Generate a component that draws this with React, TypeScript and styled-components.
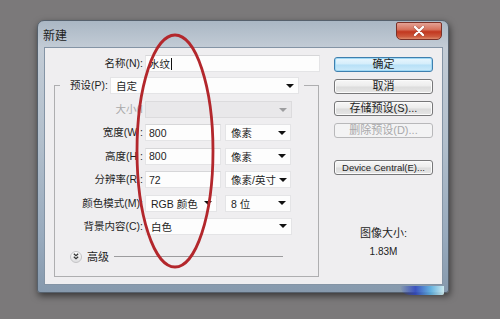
import React from 'react';
import styled, { createGlobalStyle } from 'styled-components';

const GlobalStyle = createGlobalStyle`
  html, body {
    margin: 0;
    padding: 0;
  }
  body {
    width: 500px;
    height: 319px;
    overflow: hidden;
    background: #7b797a;
    font-family: 'Liberation Sans', 'Noto Sans CJK SC', sans-serif;
    font-size: 10.5px;
    color: #1e1e1e;
  }
`;

const Page = styled.div`
  position: relative;
  width: 500px;
  height: 319px;
  box-sizing: border-box;
  padding: 20px 0 0 37px;
`;

const Window = styled.div`
  position: relative;
  width: 412px;
  height: 273px;
  box-sizing: border-box;
  display: flex;
  flex-direction: column;
  padding-bottom: 7px;
  border: 1px solid #56616d;
  border-radius: 7px 7px 3px 3px;
  background: linear-gradient(180deg, #aab7c4 0%, #c3ccd6 10%, #b2bfcc 45%, #98aabd 80%, #8699ad 100%);
  box-shadow: 1px 3px 7px rgba(0, 0, 0, 0.55);
`;

const TitleBar = styled.div`
  height: 26px;
  display: flex;
  justify-content: space-between;
  align-items: flex-start;
  padding-left: 5px;
`;

const Title = styled.span`
  padding-top: 2px;
  font-size: 12px;
  line-height: 26px;
  color: #222;
`;

const CloseButton = styled.div`
  width: 46px;
  height: 18px;
  margin: 1px 6px 0 0;
  box-sizing: border-box;
  display: flex;
  align-items: center;
  justify-content: center;
  border: 1px solid #7a3128;
  border-radius: 2px 2px 5px 5px;
  background: linear-gradient(180deg, #e3a194 0%, #d7735e 40%, #c2371f 55%, #cd5a3e 85%, #dd8a6c 100%);
`;

const Client = styled.div`
  flex: 1;
  margin: 0 5px 0 6px;
  box-sizing: border-box;
  display: flex;
  align-items: flex-start;
  border: 1px solid #8494a5;
  background: #efeef0;
`;

const FormColumn = styled.div`
  width: 266px;
  padding: 7px 0 0 9px;
`;

const NameRow = styled.div`
  display: flex;
  align-items: center;
  height: 17px;
`;

const Label = styled.span<{ $width: number; $disabled?: boolean }>`
  width: ${p => p.$width}px;
  flex-shrink: 0;
  margin-right: 2px;
  display: flex;
  justify-content: flex-end;
  white-space: nowrap;
  line-height: 17px;
  color: ${p => (p.$disabled ? '#a9a9a9' : '#1e1e1e')};
`;

const TextBox = styled.div<{ $width: number }>`
  width: ${p => p.$width}px;
  height: 17px;
  box-sizing: border-box;
  padding-left: 3px;
  display: flex;
  align-items: center;
  background: #fdfdfd;
  border: 1px solid #e4e4e6;
  border-top-color: #d6d6d8;
`;

const Caret = styled.span`
  width: 1px;
  height: 12px;
  margin-left: 1px;
  background: #111;
`;

const Select = styled.div<{ $width: number; $disabled?: boolean }>`
  width: ${p => p.$width}px;
  height: 17px;
  box-sizing: border-box;
  padding: 0 4px 0 5px;
  display: flex;
  align-items: center;
  justify-content: space-between;
  white-space: nowrap;
  background: ${p => (p.$disabled ? '#e9e8ea' : '#fdfdfd')};
  border: 1px solid ${p => (p.$disabled ? '#dcdbdd' : '#e4e4e6')};
`;

const Arrow = styled.span<{ $disabled?: boolean }>`
  width: 0;
  height: 0;
  flex-shrink: 0;
  margin-left: 3px;
  border-left: 4px solid transparent;
  border-right: 4px solid transparent;
  border-top: 4px solid ${p => (p.$disabled ? '#9d9d9f' : '#111')};
`;

const Group = styled.fieldset`
  width: 265px;
  box-sizing: border-box;
  margin: 5px 0 0 0;
  padding: 0 0 13px 0;
  border: 1px solid #aeaeb0;
  border-radius: 0;
`;

const Legend = styled.legend`
  margin-left: 5px;
  padding: 0 5px 0 0;
`;

const LegendRow = styled.div`
  display: flex;
  align-items: center;
  height: 17px;
`;

const Rows = styled.div`
  display: flex;
  flex-direction: column;
  gap: 6.4px;
  padding-top: 7px;
`;

const Row = styled.div`
  display: flex;
  align-items: center;
  height: 17px;
`;

const Spacer = styled.span<{ $width: number }>`
  width: ${p => p.$width}px;
  flex-shrink: 0;
`;

const AdvancedRow = styled.div`
  display: flex;
  align-items: center;
  height: 12px;
  margin-top: 16px;
  padding: 0 35px 0 15px;
`;

const Expander = styled.span`
  width: 12px;
  height: 12px;
  box-sizing: border-box;
  border-radius: 50%;
  display: flex;
  align-items: center;
  justify-content: center;
  border: 1px solid #c4c4c6;
  background: linear-gradient(180deg, #ffffff, #dedee0);
`;

const AdvancedText = styled.span`
  margin: 0 5px 0 5px;
  font-size: 11px;
  line-height: 12px;
`;

const Rule = styled.span`
  flex: 1;
  height: 1px;
  background: #9c9c9e;
`;

const ButtonColumn = styled.div`
  width: 99px;
  margin-left: 14px;
  padding-top: 9px;
  display: flex;
  flex-direction: column;
  align-items: stretch;
`;

const Button = styled.button<{ $primary?: boolean; $gap?: number }>`
  height: 15px;
  margin: ${p => p.$gap ?? 7}px 0 0 0;
  padding: 0;
  box-sizing: border-box;
  font-family: inherit;
  font-size: 11px;
  line-height: 13px;
  color: #1e1e1e;
  border-radius: 3px;
  border: 1px solid ${p => (p.$primary ? '#3f7fae' : '#777779')};
  background: ${p =>
    p.$primary
      ? 'linear-gradient(180deg, #eaf6fd 0%, #d3edfb 48%, #b6e0f7 52%, #cdeafa 100%)'
      : 'linear-gradient(180deg, #f7f7f7 0%, #ececec 48%, #dcdcdc 52%, #e6e6e6 100%)'};
  box-shadow: ${p => (p.$primary ? 'inset 0 0 0 1px #9fd8f5' : 'inset 0 0 0 1px #fbfbfb')};

  &:disabled {
    color: #a8a8aa;
    border-color: #b8b8ba;
    background: #f3f3f4;
    box-shadow: none;
  }
`;

const LatinText = styled.span`
  font-size: 9.5px;
`;

const SizeTitle = styled.div`
  margin-top: 51px;
  text-align: center;
  line-height: 14px;
  font-size: 11px;
`;

const SizeValue = styled.div`
  margin-top: 5px;
  text-align: center;
  line-height: 14px;
  font-size: 10px;
`;

const Glare = styled.span`
  position: absolute;
  right: 4px;
  bottom: -3px;
  width: 44px;
  height: 9px;
  border-radius: 0 0 8px 40px;
  background: linear-gradient(90deg, rgba(40, 60, 190, 0) 0%, #2f47c2 35%, #5fb6e8 70%, #d9f8fb 100%);
  opacity: 0.85;
`;

const Annotation = styled.svg`
  position: absolute;
  left: 0;
  top: 0;
  pointer-events: none;
`;

const CloseIcon = () => (
  <svg width="12" height="10" viewBox="0 0 12 10">
    <path d="M2 1 L10 9 M10 1 L2 9" stroke="#5a1a12" strokeWidth="3.4" strokeLinecap="round" opacity="0.35" />
    <path d="M2 1 L10 9 M10 1 L2 9" stroke="#ffffff" strokeWidth="2.4" strokeLinecap="round" />
  </svg>
);

const ChevronIcon = () => (
  <svg width="6" height="7" viewBox="0 0 6 7">
    <path d="M0.8 0.8 L3 2.8 L5.2 0.8 M0.8 3.8 L3 5.8 L5.2 3.8" fill="none" stroke="#333" strokeWidth="1.2" />
  </svg>
);

export default function App() {
  return (
    <>
      <GlobalStyle />
      <Page>
        <Window>
          <TitleBar>
            <Title>新建</Title>
            <CloseButton>
              <CloseIcon />
            </CloseButton>
          </TitleBar>
          <Client>
            <FormColumn>
              <NameRow>
                <Label $width={89}>名称(N):</Label>
                <TextBox $width={175}>
                  水纹
                  <Caret />
                </TextBox>
              </NameRow>
              <Group>
                <Legend>
                  <LegendRow>
                    <Label $width={48}>预设(P):</Label>
                    <Select $width={189}>
                      自定
                      <Arrow />
                    </Select>
                  </LegendRow>
                </Legend>
                <Rows>
                  <Row>
                    <Label $width={88} $disabled>
                      大小(I
                    </Label>
                    <Select $width={147} $disabled>
                      <span />
                      <Arrow $disabled />
                    </Select>
                  </Row>
                  <Row>
                    <Label $width={88}>宽度(W :</Label>
                    <TextBox $width={76}>800</TextBox>
                    <Spacer $width={4} />
                    <Select $width={66}>
                      像素
                      <Arrow />
                    </Select>
                  </Row>
                  <Row>
                    <Label $width={88}>高度(H :</Label>
                    <TextBox $width={76}>800</TextBox>
                    <Spacer $width={4} />
                    <Select $width={66}>
                      像素
                      <Arrow />
                    </Select>
                  </Row>
                  <Row>
                    <Label $width={88}>分辨率(R :</Label>
                    <TextBox $width={76}>72</TextBox>
                    <Spacer $width={4} />
                    <Select $width={66}>
                      像素/英寸
                      <Arrow />
                    </Select>
                  </Row>
                  <Row>
                    <Label $width={88}>颜色模式(M):</Label>
                    <Select $width={72}>
                      RGB 颜色
                      <Arrow />
                    </Select>
                    <Spacer $width={8} />
                    <Select $width={66}>
                      8 位
                      <Arrow />
                    </Select>
                  </Row>
                  <Row>
                    <Label $width={88}>背景内容(C):</Label>
                    <Select $width={147}>
                      白色
                      <Arrow />
                    </Select>
                  </Row>
                </Rows>
                <AdvancedRow>
                  <Expander>
                    <ChevronIcon />
                  </Expander>
                  <AdvancedText>高级</AdvancedText>
                  <Rule />
                </AdvancedRow>
              </Group>
            </FormColumn>
            <ButtonColumn>
              <Button $primary $gap={0}>确定</Button>
              <Button>取消</Button>
              <Button>存储预设(S)...</Button>
              <Button disabled>删除预设(D)...</Button>
              <Button $gap={22}>
                <LatinText>Device Central(E)...</LatinText>
              </Button>
              <SizeTitle>图像大小:</SizeTitle>
              <SizeValue>1.83M</SizeValue>
            </ButtonColumn>
          </Client>
          <Glare />
        </Window>
        <Annotation width="500" height="319" viewBox="0 0 500 319">
          <ellipse cx="175" cy="151" rx="38" ry="116" fill="none" stroke="#b3272c" strokeWidth="2.8" />
        </Annotation>
      </Page>
    </>
  );
}
